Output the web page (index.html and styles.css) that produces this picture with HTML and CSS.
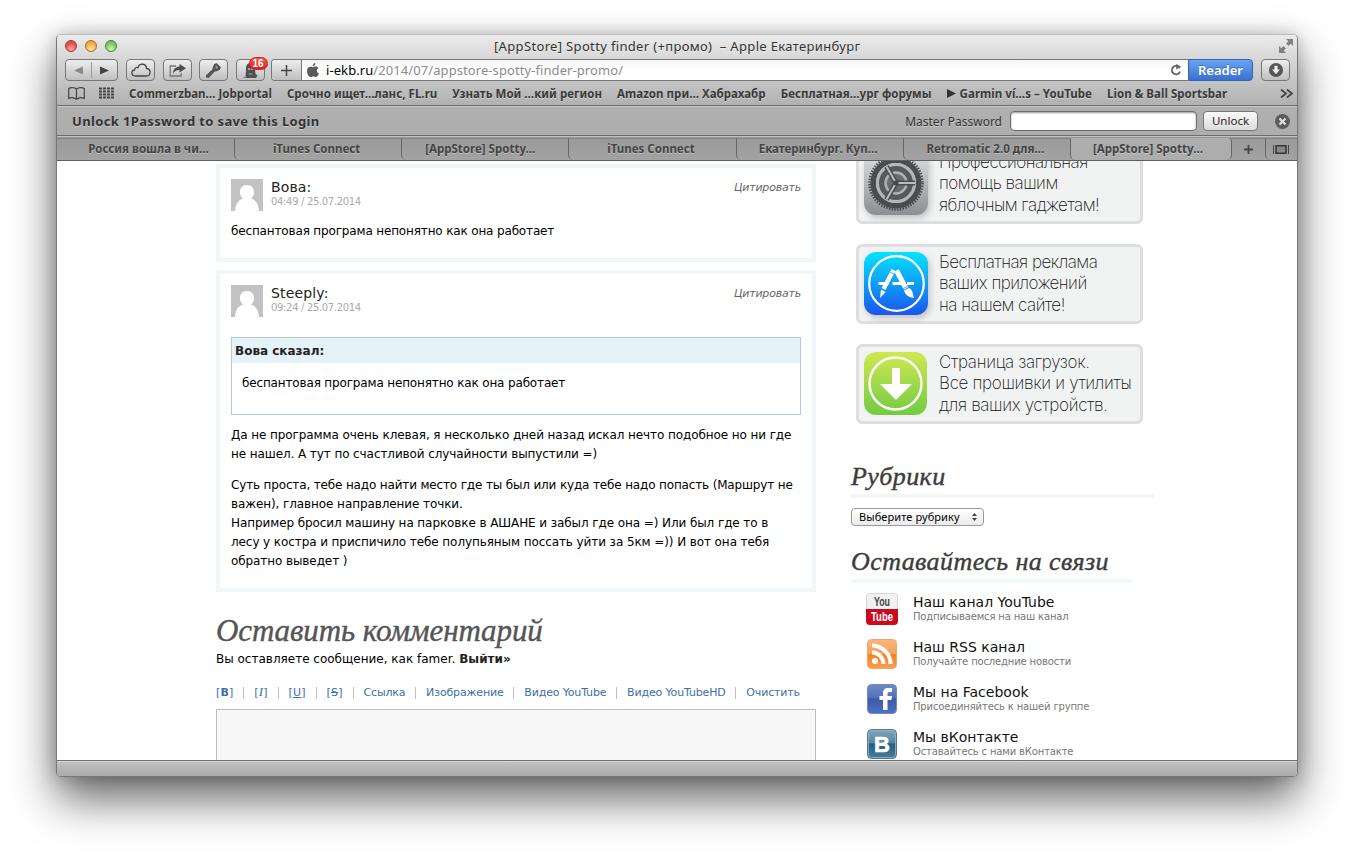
FILE: index.html
```html
<!DOCTYPE html>
<html lang="ru">
<head>
<meta charset="utf-8">
<title>[AppStore] Spotty finder (+промо) – Apple Екатеринбург</title>
<link rel="stylesheet" href="styles.css">
</head>
<body>
<div class="window">
  <header class="chrome">
    <div class="titlebar">
      <div class="lights"><i class="light red"></i><i class="light amber"></i><i class="light green"></i></div>
      <div class="title">[AppStore] Spotty finder (+промо)&nbsp; – Apple Екатеринбург</div>
      <svg class="fullscreen" width="14" height="14" viewBox="0 0 14 14" fill="#808080"><path d="M7 0h7v7l-2.300-2.300-2.200 2.200-2.400-2.400 2.200-2.200zM0 7l2.300 2.300 2.200-2.200 2.400 2.400-2.200 2.200L7 14H0z"/></svg>
    </div>
    <div class="toolbar">
      <div class="btn nav">
        <span><svg width="9" height="9" viewBox="0 0 9 9"><path d="M9 .5v8L0 4.500z" fill="#8a8a8a"/></svg></span>
        <span><svg width="9" height="9" viewBox="0 0 9 9"><path d="M0 .5v8L9 4.500z" fill="#444"/></svg></span>
      </div>
      <div class="btn"><svg width="20" height="14" viewBox="0 0 20 14" fill="none" stroke="#444" stroke-width="1.300"><path d="M4.500 13C-.2 13-.2 7.200 3.600 7 3.600 4.700 5.600 4 6.900 4.700 8.300-.4 15.600.3 15.500 5.500c4.600.2 4.800 7.500.2 7.500z"/></svg></div>
      <div class="btn"><svg width="17" height="13" viewBox="0 0 17 13"><path d="M7 2H1.200v10h11V9" fill="none" stroke="#777" stroke-width="1.300"/><path d="M10.500 0 17 4.200l-6.500 4.200V6C7.500 6 5.500 7 4 9.500 4.200 5.500 6.500 3 10.500 2.600z" fill="#4a4a4a"/></svg></div>
      <div class="btn"><svg width="15" height="15" viewBox="0 0 15 15" fill="#555"><path d="M8 1.200 10.500 0 15 4.500 13.600 7 10 8.600 8.700 8.500 2.700 15 0 14.500V12.300L6.600 6.300 6.500 5z"/><circle cx="10.600" cy="4.400" r="1.100" fill="#aaa"/></svg></div>
      <div class="btn ghost"><svg width="15" height="15" viewBox="0 0 15 15"><path d="M2.500 15 3 6C3 1.500 5 0 7.500 0S12 1.500 12 6l.5 5 2 1.500-1.500 2.500H1l-1-1.500z" fill="#505050"/><circle cx="6" cy="6" r="1.100" fill="#bbb"/><circle cx="9" cy="6" r="1.100" fill="#bbb"/><path d="M5 11.500q2.500-3 5 0z" fill="#999"/></svg><b class="badge">16</b></div>
      <div class="address">
        <div class="add"><svg width="11" height="11" viewBox="0 0 11 11"><path d="M5.500 0v11M0 5.500h11" stroke="#444" stroke-width="1.500"/></svg></div>
        <svg class="apple" width="12" height="14" viewBox="0 0 12 14" fill="#5a5a5a"><path d="M8.300 0C8.500 1.800 7.200 3.300 5.800 3.300 5.600 1.700 6.900.2 8.300 0zM6.100 4.300C7 4.300 7.400 3.600 8.700 3.600c1.200 0 2.100.6 2.700 1.400-2.300 1.400-2 4.500.6 5.500C11.300 12.300 10.100 14 8.800 14c-.9 0-1.400-.5-2.500-.5S4.700 14 3.900 14C2 14 0 10.800 0 7.900 0 5.200 1.700 3.700 3.400 3.700c1.200 0 2 .6 2.700.6z"/></svg>
        <div class="url">i-ekb.ru<span>/2014/07/appstore-spotty-finder-promo/</span></div>
        <svg class="reload" width="12" height="12" viewBox="0 0 12 12"><path d="M9.800 4.200A4.200 4.200 0 1 0 10 7.600" fill="none" stroke="#666" stroke-width="1.800"/><path d="M6.200 0v5.500L11 2.800z" fill="#666"/></svg>
      </div>
      <div class="reader">Reader</div>
      <div class="btn"><svg width="14" height="14" viewBox="0 0 14 14"><circle cx="7" cy="7" r="7" fill="#555"/><path d="M5.400 2.800h3.200v3.800h2.400L7 11.200 3 6.600h2.400z" fill="#eee"/></svg></div>
    </div>
    <nav class="bookmarks">
      <svg class="book" width="17" height="13" viewBox="0 0 17 13" fill="none" stroke="#444" stroke-width="1.200"><path d="M8.500 12.500V2C6.500.3 2.500.3.700 1.500v10C3 10.300 6.500 10.800 8.500 12.300 10.500 10.800 14 10.300 16.300 11.500v-10C14.500.3 10.500.3 8.500 2"/></svg>
      <svg class="dots" width="15" height="12" viewBox="0 0 15 12"><path d="M0 1.500h15M0 4.500h15M0 7.500h15M0 10.500h15" stroke="#444" stroke-width="2" stroke-dasharray="3 1"/></svg>
      <a>Commerzban… Jobportal</a><a>Срочно ищет…ланс, FL.ru</a><a>Узнать Мой …кий регион</a><a>Amazon при… Хабрахабр</a><a>Бесплатная…ург форумы</a><a><svg width="9" height="9" viewBox="0 0 9 9"><path d="M0 0v9l9-4.500z" fill="#333"/></svg> Garmin ví…s – YouTube</a><a>Lion &amp; Ball Sportsbar</a>
      <svg class="more" width="13" height="9" viewBox="0 0 13 9" fill="none" stroke="#444" stroke-width="1.800"><path d="M1 .5 6 4.500 1 8.500M7 .5l5 4-5 4"/></svg>
    </nav>
    <div class="unlockbar">
      <b>Unlock 1Password to save this Login</b>
      <label>Master Password</label>
      <div class="password"></div>
      <div class="unlock">Unlock</div>
      <svg width="15" height="15" viewBox="0 0 15 15"><circle cx="7.500" cy="7.500" r="7.500" fill="#5c5c5c"/><path d="m4.500 4.500 6 6m0-6-6 6" stroke="#ddd" stroke-width="2.200"/></svg>
    </div>
    <div class="tabs">
      <div class="tab first">Россия вошла в чи…</div><div class="tab">iTunes Connect</div><div class="tab spotty">[AppStore] Spotty…</div><div class="tab">iTunes Connect</div><div class="tab">Екатеринбург. Куп…</div><div class="tab">Retromatic 2.0 для…</div><div class="tab active">[AppStore] Spotty…</div>
      <div class="tab plus"><svg width="9" height="9" viewBox="0 0 9 9"><path d="M4.500 0v9M0 4.500h9" stroke="#444" stroke-width="1.800"/></svg></div>
      <div class="tab all"><svg width="16" height="9" viewBox="0 0 16 9"><path d="M.5 0v9M15.500 0v9" stroke="#444"/><path d="M3 .7h10v7.600H3z" fill="#888" stroke="#333" stroke-width="1.500"/></svg></div>
    </div>
  </header>

  <main class="page">
    <section class="content">
      <article class="comment">
        <div class="head">
          <svg width="32" height="32" viewBox="0 0 32 32"><path d="M0 0h32v32H0z" fill="#c2c2c2"/><path d="M4 32c.3-6 3-11 8-12.500C7 16 8 6 16 6s9 10 4 13.500C25 21 27.700 26 28 32z" fill="#fff"/></svg>
          <div><div class="name">Вова:</div><div class="time">04:49 / 25.07.2014</div></div>
          <em>Цитировать</em>
        </div>
        <p class="short">беспантовая програма непонятно как она работает</p>
      </article>
      <article class="comment second">
        <div class="head">
          <svg width="32" height="32" viewBox="0 0 32 32"><path d="M0 0h32v32H0z" fill="#c2c2c2"/><path d="M4 32c.3-6 3-11 8-12.500C7 16 8 6 16 6s9 10 4 13.500C25 21 27.700 26 28 32z" fill="#fff"/></svg>
          <div><div class="name">Steeply:</div><div class="time">09:24 / 25.07.2014</div></div>
          <em>Цитировать</em>
        </div>
        <blockquote><b>Вова сказал:</b><p class="short">беспантовая програма непонятно как она работает</p></blockquote>
        <p>Да не программа очень клевая, я несколько дней назад искал нечто подобное но ни где<br>не нашел. А тут по счастливой случайности выпустили =)</p>
        <p><span class="short">Суть проста, тебе надо найти место где ты был или куда тебе надо попасть (Маршрут не</span><br>важен), главное направление точки.<br>Например бросил машину на парковке в АШАНЕ и забыл где она =) Или был где то в<br>лесу у костра и приспичило тебе полупьяным поссать уйти за 5км =)) И вот она тебя<br>обратно выведет )</p>
      </article>
      <h2>Оставить комментарий</h2>
      <div class="logged">Вы оставляете сообщение, как famer. <b>Выйти»</b></div>
      <div class="format">
        <a class="tag">[<b>B</b>]</a><i></i><a class="tag">[<span class="ital">I</span>]</a><i></i><a class="tag">[<u>U</u>]</a><i></i><a class="tag">[<s>S</s>]</a><i></i><a>Ссылка</a><i></i><a>Изображение</a><i></i><a>Видео YouTube</a><i></i><a>Видео YouTubeHD</a><i></i><a>Очистить</a>
      </div>
      <div class="editor"></div>
    </section>

    <aside class="side">
      <div class="banner">
        <svg width="64" height="64" viewBox="0 0 64 64">
          <defs><linearGradient id="gs" x2="0" y2="1"><stop stop-color="#dedfe2"/><stop offset="1" stop-color="#8d8e92"/></linearGradient></defs>
          <rect width="64" height="63" rx="12" fill="url(#gs)"/>
          <circle cx="32" cy="31" r="26.500" fill="none" stroke="#47484a" stroke-width="2.500" stroke-dasharray="1.400 1.370"/>
          <circle cx="32" cy="31" r="22.800" fill="none" stroke="#4b4c4e" stroke-width="5.500"/>
          <circle cx="32" cy="31" r="18.500" fill="#58595b" stroke="#b5b6b8" stroke-width="3"/>
          <circle cx="32" cy="31" r="10.500" fill="#6b6b6d" stroke="#b0b1b3" stroke-width="2.500"/>
          <path d="M32 31h19M32 31 22.500 14.500M32 31 22.500 47.500" stroke="#4b4c4e" stroke-width="5"/>
          <path d="M32 31h19M32 31 22.500 14.500M32 31 22.500 47.500" stroke="#bbbcbe" stroke-width="2"/>
          <circle cx="32" cy="31" r="2.500" fill="#47484a"/>
        </svg>
        <div>Профессиональная<br>помощь вашим<br>яблочным гаджетам!</div>
      </div>
      <div class="banner">
        <svg width="64" height="64" viewBox="0 0 64 64">
          <defs><linearGradient id="as" x2="0" y2="1"><stop stop-color="#04e4fd"/><stop offset="1" stop-color="#1b55ee"/></linearGradient></defs>
          <rect width="64" height="63" rx="12" fill="url(#as)"/>
          <circle cx="32.500" cy="31.500" r="27.300" fill="none" stroke="#fff" stroke-width="2.200"/>
          <path d="M14.500 31.500h10M28.500 31.500h9M43 31.500h7" stroke="#fff" stroke-width="2.800"/>
          <path d="m29.500 18-10 19" stroke="#fff" stroke-width="4.500"/><path d="m17 37.500 4.500 2.500-5.500 6z" fill="#fff"/>
          <path d="m32.500 18.500 9.500 18" stroke="#fff" stroke-width="5"/><path d="m40 38.500 5-2.500c4 2 3.500 5.500 5 10-3.500-.5-8-1.500-10-7.500z" fill="#fff"/>
          <path d="m26 20 4 2.300m9 14.400 4.500-2.400" stroke="#189df7" stroke-width=".8"/>
        </svg>
        <div>Бесплатная реклама<br>ваших приложений<br>на нашем сайте!</div>
      </div>
      <div class="banner downloads">
        <svg width="64" height="64" viewBox="0 0 64 64">
          <defs><linearGradient id="dl" x2="0" y2="1"><stop stop-color="#d0e852"/><stop offset="1" stop-color="#72cb43"/></linearGradient></defs>
          <rect width="63" height="63" rx="12" fill="url(#dl)"/>
          <circle cx="31.500" cy="31.500" r="26" fill="none" stroke="#fff" stroke-width="2.400"/>
          <path d="M28 16h8v16h12L32 48 16 32h12z" fill="#fff"/>
        </svg>
        <div>Страница загрузок.<br>Все прошивки и утилиты<br>для ваших устройств.</div>
      </div>
      <h3>Рубрики</h3>
      <div class="select"><span>Выберите рубрику</span><svg width="5" height="8" viewBox="0 0 5 8" fill="#444"><path d="M0 3 2.500 0 5 3zM0 5l2.500 3L5 5z"/></svg></div>
      <h3 class="stay">Оставайтесь на связи</h3>
      <ul class="social">
        <li>
          <svg width="32" height="32" viewBox="0 0 32 32"><rect x=".5" y=".5" width="31" height="31" rx="3" fill="#f1f1f1" stroke="#d8d8d8"/><path d="M0 16h32v12q0 4-4 4H4q-4 0-4-4z" fill="#cb0a1e"/><text class="yt" x="8" y="13" textLength="16" lengthAdjust="spacingAndGlyphs" fill="#444">You</text><text class="yt" x="5" y="28" textLength="22" lengthAdjust="spacingAndGlyphs" fill="#fff">Tube</text></svg>
          <div><strong>Наш канал YouTube</strong><small>Подписываемся на наш канал</small></div>
        </li>
        <li>
          <svg width="32" height="32" viewBox="0 0 32 32"><defs><linearGradient id="rs" x2="0" y2="1"><stop stop-color="#fbb57b"/><stop offset=".5" stop-color="#f8a158"/><stop offset=".52" stop-color="#f58220"/><stop offset="1" stop-color="#fba04e"/></linearGradient></defs><rect x="1.500" y="1.500" width="29" height="29" rx="4" fill="url(#rs)" stroke="#e8a878"/><circle cx="9" cy="23" r="3" fill="#fff"/><path d="M6 14.500A11.500 11.500 0 0 1 17.500 26M6 7.500A18.500 18.500 0 0 1 24.500 26" fill="none" stroke="#fff" stroke-width="4"/></svg>
          <div><strong>Наш RSS канал</strong><small>Получайте последние новости</small></div>
        </li>
        <li>
          <svg width="32" height="32" viewBox="0 0 32 32"><defs><linearGradient id="fb" x2="0" y2="1"><stop stop-color="#7089c6"/><stop offset=".45" stop-color="#5570b7"/><stop offset=".5" stop-color="#3c59a4"/><stop offset="1" stop-color="#4f72c4"/></linearGradient></defs><rect x="1.500" y="1.500" width="29" height="29" rx="4" fill="url(#fb)" stroke="#7187bd"/><path d="M17 27V17h-3.500v-4H17v-2.500C17 6.500 19 5 22 5h4v4h-2.500c-1.500 0-2 .7-2 2v2H26l-.6 4h-3.900v10z" fill="#fff"/></svg>
          <div><strong>Мы на Facebook</strong><small>Присоединяйтесь к нашей группе</small></div>
        </li>
        <li>
          <svg width="32" height="32" viewBox="0 0 32 32"><defs><linearGradient id="vk" x2="0" y2="1"><stop stop-color="#82a6bd"/><stop offset=".45" stop-color="#5486a5"/><stop offset=".5" stop-color="#255d80"/><stop offset="1" stop-color="#4a7e9f"/></linearGradient></defs><rect x="1.500" y="1.500" width="29" height="29" rx="4" fill="url(#vk)" stroke="#55788e"/><rect x="2.500" y="2.500" width="27" height="27" rx="3" fill="none" stroke="#9ab6c6" stroke-width=".8"/><text class="vk" x="8" y="24">B</text></svg>
          <div><strong>Мы вКонтакте</strong><small>Оставайтесь с нами вКонтакте</small></div>
        </li>
      </ul>
    </aside>
  </main>
  <footer class="status"></footer>
</div>
</body>
</html>
```
FILE: styles.css
```css
* { box-sizing: border-box; }
body { margin: 0; height: 855px; overflow: hidden; background: #fff; padding: 34px 56px; font-family: "DejaVu Sans", sans-serif; }
svg { display: block; flex: none; }

.window { width: 1242px; height: 743px; border: 1px solid #777; border-top-color: #bbb; border-radius: 5px; overflow: hidden; background: #fff; display: flex; flex-direction: column; box-shadow: 0 22px 45px rgba(0,0,0,.6), 0 0 18px rgba(0,0,0,.2); }

.chrome { flex: none; height: 126px; font-family: "Noto Sans", sans-serif; color: #333; background: linear-gradient(#ebebeb, #b0b0b0 71px, #aaa); text-shadow: 0 1px 0 rgba(255,255,255,.35); }
.titlebar { height: 24px; padding-bottom: 2px; display: flex; align-items: center; position: relative; }
.lights { display: flex; gap: 8px; padding-left: 8px; }
.light { width: 12px; height: 12px; border-radius: 50%; border: 1px solid; }
.red { background: radial-gradient(circle at 50% 85%, #ffb0a8, #ee4f50 60%, #e04040); border-color: #a03434; }
.amber { background: radial-gradient(circle at 50% 85%, #ffe79a, #f5b04a 60%, #e79c3c); border-color: #9f6b2b; }
.green { background: radial-gradient(circle at 50% 85%, #d4f5a8, #82c866 60%, #66b050); border-color: #457f38; }
.title { position: absolute; left: 437px; top: 0; font-size: 13px; line-height: 22px; letter-spacing: .34px; white-space: nowrap; }
.fullscreen { margin-left: auto; margin-right: 4px; }

.toolbar { display: flex; padding: 0 7px 0 8px; height: 22px; }
.btn { width: 29px; height: 22px; margin-right: 7.500px; border: 1px solid #777; border-radius: 4px; background: linear-gradient(#eee, #bfbfbf); display: flex; align-items: center; justify-content: center; }
.btn.nav { width: 53px; margin-right: 8px; }
.nav span { flex: 1; height: 16px; display: flex; align-items: center; justify-content: center; }
.nav span + span { border-left: 1px solid #999; }
.toolbar > .btn:last-child { margin: 0 0 0 8px; }
.ghost { position: relative; }
.badge { position: absolute; left: 12px; top: -3px; width: 19px; height: 13px; border-radius: 7px; background: linear-gradient(#f45a50, #dc1f1b); border: 1px solid #c22; color: #fff; font: bold 10px/11px "Liberation Sans", sans-serif; text-align: center; text-shadow: none; }
.address { flex: 1; display: flex; align-items: center; background: linear-gradient(#f4f4f4, #fff 50%); border: 1px solid #777; border-radius: 4px 0 0 4px; overflow: hidden; border-right: 0; margin-left: -1px; }
.add { width: 30px; height: 20px; border-right: 1px solid #777; background: linear-gradient(#eee, #bfbfbf); display: flex; align-items: center; justify-content: center; }
.apple { margin-left: 5px; }
.url { margin-left: 7px; flex: 1; font-size: 13px; line-height: 20px; color: #000; letter-spacing: .08px; white-space: nowrap; }
.url span { color: #8c8c8c; }
.reload { margin-right: 6px; }
.reader { width: 65px; height: 22px; border: 1px solid #3762ad; border-radius: 0 4px 4px 0; background: linear-gradient(#69a3f1, #3a70d4); color: #fff; font-size: 13px; font-weight: 600; line-height: 20px; text-align: center; text-shadow: 0 -1px 0 rgba(0,0,0,.25); }

.bookmarks { height: 25px; border-bottom: 1px solid #6c6c6c; display: flex; align-items: center; font-size: 11.500px; font-weight: 700; color: #3a3a3a; letter-spacing: .03px; white-space: nowrap; }
.book { margin-left: 11px; }
.dots { margin: 0 15px 0 14px; }
.bookmarks a { display: flex; align-items: center; gap: 4px; margin-right: 15px; }
.more { margin-left: auto; margin-right: 4px; }

.unlockbar { height: 30px; border-top: 1px solid #c6c6c6; border-bottom: 1px solid #6c6c6c; display: flex; align-items: center; padding: 0 7px 0 15px; font-size: 13px; }
.unlockbar b { letter-spacing: .36px; }
.unlockbar label { margin-left: auto; font-size: 12px; }
.password { width: 187px; height: 20px; margin: 0 6px 0 8px; border: 1px solid #6c6c6c; border-radius: 4px; background: #fff; box-shadow: inset 0 1px 2px #999; }
.unlock { width: 55px; height: 20px; margin-right: 17px; border: 1px solid #777; border-radius: 4px; background: linear-gradient(#fafafa, #dcdcdc); font-size: 11.500px; line-height: 18px; text-align: center; color: #222; }

.tabs { height: 25px; padding-top: 2px; border-bottom: 1px solid #5f5f5f; display: flex; background: linear-gradient(#c0c0c0 1px, #707070 2px, #9a9a9a 3px, #a3a3a3); }
.tab { width: 167.200px; flex: none; border-left: 1px solid #666; border-radius: 0 0 0 5px; font-size: 11.500px; font-weight: 700; line-height: 20px; text-align: center; color: #444; white-space: nowrap; display: flex; justify-content: center; align-items: center; padding: 0 3px 1px 0; }
.tab.first { width: 177px; border: 0; padding-left: 9px; }
.tab.spotty { padding-right: 10px; }
.tab.active { width: 162px; background: #adadad; border-right: 1px solid #666; border-radius: 0 4px 5px 5px; padding: 0 6px 1px 0; }
.tab.plus { width: 33px; padding: 0; border-left: 0; }
.tab.all { flex: 1; padding: 0; }

.page { flex: 1; min-height: 0; overflow: hidden; display: flex; padding: 0 0 0 159px; }
.content { width: 600px; padding-top: 3px; font-size: 12px; line-height: 19px; color: #000; white-space: nowrap; }
.comment { height: 98px; margin-bottom: 8px; padding: 11px; border: 4px solid #f1f6f9; }
.comment.second { height: 322px; margin: 0; }
.head { display: flex; gap: 8px; height: 32px; }
.name { font-size: 14px; line-height: 17px; color: #222; letter-spacing: .15px; }
.time { font-size: 10px; line-height: 12px; color: #aaa; letter-spacing: -.33px; }
.head em { margin-left: auto; font-size: 11px; line-height: 18px; color: #666; letter-spacing: -.2px; }
.comment p { margin: 11px 0 12px; letter-spacing: -.09px; }
.comment .short { letter-spacing: -.155px; }
.second p { margin: 0 0 12px; }
blockquote { margin: 20px 0 11px; height: 78px; border: 1px solid #b8c8d0; }
blockquote b { display: block; height: 25px; padding: 3px; line-height: 20px; background: #e5f3f9; color: #222; }
.second blockquote p { margin: 11px 10px; }
h2, h3 { font-family: "Liberation Serif", serif; font-style: italic; font-weight: 400; -webkit-text-stroke: .4px; }
h2 { margin: 22px 0 0; font-size: 31px; line-height: 34px; color: #555; letter-spacing: -.1px; }
.logged { margin-top: 2px; }
.logged b { color: #222; }
.format { width: 584px; margin-top: 14px; display: flex; justify-content: space-between; align-items: center; font-size: 11px; color: #3d6fa9; letter-spacing: -.15px; }
.format .tag { letter-spacing: .2px; }
.format i { width: 1px; height: 12px; background: #c8bcc0; }
.ital { font-family: "Liberation Serif", serif; font-style: italic; font-size: 13px; line-height: 12px; }
.editor { margin-top: 7px; height: 160px; border: 1px solid #bcbcbc; background: #f7f7f7; }

.side { margin-left: 35px; margin-top: -17px; width: 304px; white-space: nowrap; }
.banner { width: 287px; height: 80px; margin: 0 0 20px 5px; padding: 5px; border: 3px solid #dcdedf; border-radius: 6px; background: #f1f3f3; display: flex; gap: 11px; font: 200 17px/21.300px Inter, sans-serif; letter-spacing: -.5px; color: #111; }
.banner > svg { filter: drop-shadow(2px 3px 3px rgba(0,0,0,.2)); }
.banner.downloads { letter-spacing: -.32px; }
.downloads > svg { filter: none; }
h3 { margin: 36px 0 0; height: 38px; font-size: 26px; line-height: 34px; color: #3c3c3c; border-bottom: 4px solid #f1f6f9; letter-spacing: .42px; }
.select { margin-top: 10px; width: 133px; height: 18px; border: 1px solid #999; border-radius: 4px; background: linear-gradient(#fff, #ebebeb); display: flex; align-items: center; justify-content: space-between; padding: 0 6px 0 7px; font: 11px/16px "Noto Sans", sans-serif; color: #000; letter-spacing: .1px; }
h3.stay { width: 281px; margin-top: 19px; }
.social { list-style: none; margin: 10px 0 0; padding: 0 0 0 15px; }
.social li { display: flex; gap: 15px; height: 45px; }
.social strong { display: block; font-size: 14px; line-height: 18px; font-weight: 400; color: #111; }
.social small { display: block; font-size: 10px; line-height: 12px; color: #777; letter-spacing: -.15px; }
.yt { font: bold 13px "Liberation Sans", sans-serif; }
.vk { font: bold 22px "Liberation Sans", sans-serif; fill: #fff; stroke: #fff; stroke-width: .6px; }

.status { flex: none; height: 16px; background: linear-gradient(#c2c2c2, #a9a9a9); border-top: 1px solid #707070; box-shadow: inset 0 1px 0 #d6d6d6; }
```
